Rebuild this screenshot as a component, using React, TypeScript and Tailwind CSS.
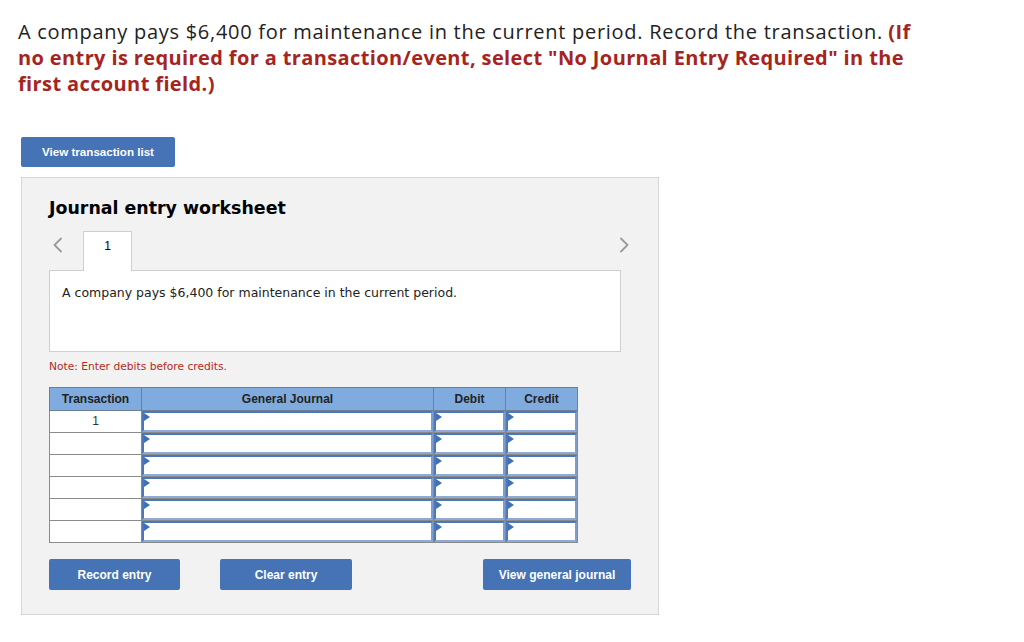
import React from "react";

const Tri = () => (
  <span className="absolute left-0 top-0 h-0 w-0 border-y-[4px] border-l-[6px] border-y-transparent border-l-[#3e6fb8]" />
);

const InputCell = ({ w }: { w: string }) => (
  <td className={`${w} p-0 border border-[#8a8a8a] bg-white`}>
    <div className="relative h-[21px] border-2 border-t-[#4d78b8] border-l-[#4d78b8] border-r-[#7e9ccd] border-b-[#8eaad6] bg-white">
      <Tri />
    </div>
  </td>
);

const Chevron = ({ dir }: { dir: "l" | "r" }) => (
  <svg width="11" height="16" viewBox="0 0 11 16" fill="none">
    <path
      d={dir === "l" ? "M9 1.5 L2.5 8 L9 14.5" : "M2 1.5 L8.5 8 L2 14.5"}
      stroke="#9a9a9a"
      strokeWidth="1.8"
      strokeLinecap="round"
      strokeLinejoin="round"
    />
  </svg>
);

export default function App() {
  const rows = [1, 2, 3, 4, 5, 6];
  return (
    <div className="w-[1024px] h-[642px] bg-white overflow-hidden pl-[18px] pt-[19px]">
      <p
        className="text-[20px] leading-[26px] text-[#222] w-[920px]"
        style={{ fontFamily: '"Open Sans", "Liberation Sans", sans-serif' }}
      >
        <span className="tracking-[0.72px]">
          A company pays $6,400 for maintenance in the current period. Record the transaction.
        </span>{" "}
        <span className="font-bold text-[#a6241e] tracking-[0.38px]">
          (If no entry is required for a transaction/event, select "No Journal Entry Required" in the first account field.)
        </span>
      </p>

      <button
        className="mt-[40px] ml-[3px] w-[154px] h-[30px] rounded-[2px] bg-[#4573b5] text-white text-[11.6px] font-bold"
        style={{ fontFamily: '"Liberation Sans", Arial, sans-serif' }}
      >
        View transaction list
      </button>

      <div className="mt-[10px] ml-[3px] w-[638px] h-[438px] bg-[#f2f2f2] border border-[#d6d6d6] pl-[27px] pt-[18px]">
        <h2
          className="text-[17.4px] font-bold text-black leading-[24px]"
          style={{ fontFamily: '"DejaVu Sans", Verdana, sans-serif' }}
        >
          Journal entry worksheet
        </h2>

        <div className="mt-[11px] flex items-end w-[572px] relative">
          <span className="absolute left-[3px] top-[6px]">
            <Chevron dir="l" />
          </span>
          <span className="absolute right-[-9px] top-[6px]">
            <Chevron dir="r" />
          </span>
          <div
            className="ml-[34px] w-[49px] h-[40px] bg-white border border-b-0 border-[#cfcfcf] flex justify-center pt-[5px] text-[12px] text-black relative z-10 -mb-px"
            style={{ fontFamily: '"Liberation Sans", Arial, sans-serif' }}
          >
            1
          </div>
        </div>
        <div
          className="w-[572px] h-[82px] bg-white border border-[#cfcfcf] pl-[12px] pt-[13px] text-[12.5px] text-[#222]"
          style={{ fontFamily: '"DejaVu Sans", Verdana, sans-serif' }}
        >
          A company pays $6,400 for maintenance in the current period.
        </div>

        <p
          className="mt-[8px] text-[10.7px] text-[#b22a23] leading-[14px]"
          style={{ fontFamily: '"DejaVu Sans", Verdana, sans-serif' }}
        >
          Note: Enter debits before credits.
        </p>

        <table
          className="mt-[13px] border-collapse text-[12px]"
          style={{ fontFamily: '"Liberation Sans", Arial, sans-serif' }}
        >
          <thead>
            <tr className="h-[23px] bg-[#80abdf] text-[#222] font-bold">
              <th className="w-[92px] border border-[#6b7f99] font-bold">Transaction</th>
              <th className="w-[292px] border border-[#6b7f99] font-bold">General Journal</th>
              <th className="w-[72px] border border-[#6b7f99] font-bold">Debit</th>
              <th className="w-[72px] border border-[#6b7f99] font-bold">Credit</th>
            </tr>
          </thead>
          <tbody>
            {rows.map((r) => (
              <tr key={r} className="h-[22px]">
                <td className="w-[92px] p-0 border border-[#8a8a8a] bg-white text-center text-[12px] text-[#333] align-top">
                  <div className="h-[21px] leading-[20px]">{r === 1 ? "1" : ""}</div>
                </td>
                <InputCell w="w-[292px]" />
                <InputCell w="w-[72px]" />
                <InputCell w="w-[72px]" />
              </tr>
            ))}
          </tbody>
        </table>

        <div
          className="mt-[16px] flex w-[582px] text-[12px] font-bold text-white"
          style={{ fontFamily: '"Liberation Sans", Arial, sans-serif' }}
        >
          <button className="w-[131px] h-[31px] rounded-[2px] bg-[#4573b5]">Record entry</button>
          <button className="ml-[40px] w-[132px] h-[31px] rounded-[2px] bg-[#4573b5]">Clear entry</button>
          <button className="ml-auto w-[148px] h-[31px] rounded-[2px] bg-[#4573b5]">View general journal</button>
        </div>
      </div>
    </div>
  );
}
